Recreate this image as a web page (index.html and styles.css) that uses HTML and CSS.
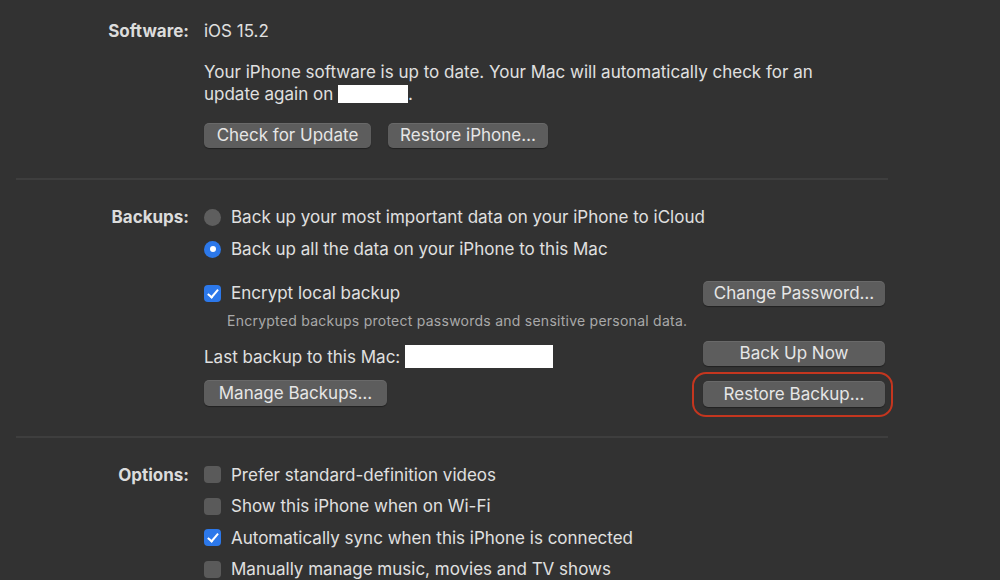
FILE: index.html
```html
<!DOCTYPE html>
<html>
<head>
<meta charset="utf-8">
<link rel="stylesheet" href="styles.css">
</head>
<body>
<div class="page">
  <section class="section sec-software">
    <div class="label">Software:</div>
    <div class="content">
      <div class="line">iOS 15.2</div>
      <p class="para">Your iPhone software is up to date. Your Mac will automatically check for an<br>update again on <span class="redact redact-date"></span>.</p>
      <div class="btn-row">
        <button class="btn btn-check">Check for Update</button>
        <button class="btn btn-restore-iphone">Restore iPhone…</button>
      </div>
    </div>
  </section>
  <div class="sep"></div>
  <section class="section sec-backups">
    <div class="label">Backups:</div>
    <div class="content">
      <div class="opt"><span class="radio"></span><span>Back up your most important data on your iPhone to iCloud</span></div>
      <div class="opt"><span class="radio on"></span><span>Back up all the data on your iPhone to this Mac</span></div>
      <div class="split row-encrypt">
        <div class="opt"><span class="check on"></span><span>Encrypt local backup</span></div>
        <button class="btn btn-side">Change Password…</button>
      </div>
      <div class="note">Encrypted backups protect passwords and sensitive personal data.</div>
      <div class="split row-last">
        <div class="last"><span>Last backup to this Mac:</span><span class="redact redact-last"></span></div>
        <button class="btn btn-side">Back Up Now</button>
      </div>
      <div class="split row-manage">
        <button class="btn btn-manage">Manage Backups…</button>
        <div class="ring-wrap"><button class="btn btn-side">Restore Backup…</button></div>
      </div>
    </div>
  </section>
  <div class="sep sep2"></div>
  <section class="section sec-options">
    <div class="label">Options:</div>
    <div class="content">
      <div class="opt opt-o"><span class="check"></span><span>Prefer standard-definition videos</span></div>
      <div class="opt opt-o"><span class="check"></span><span>Show this iPhone when on Wi-Fi</span></div>
      <div class="opt opt-o"><span class="check on"></span><span>Automatically sync when this iPhone is connected</span></div>
      <div class="opt opt-o"><span class="check"></span><span>Manually manage music, movies and TV shows</span></div>
    </div>
  </section>
</div>
</body>
</html>
```

FILE: styles.css
```css
html, body {
  margin: 0;
  padding: 0;
  background: #323232;
}
body {
  width: 1000px;
  height: 580px;
  overflow: hidden;
  font-family: Inter, "Noto Sans", sans-serif;
  font-size: 17px;
  color: #e0e0e0;
}
.page {
  width: 1000px;
}
.section {
  display: flex;
  align-items: flex-start;
  column-gap: 15px;
}
.label {
  width: 189px;
  flex: none;
  text-align: right;
  font-weight: 700;
  font-size: 17px;
  color: #dcdcdc;
  line-height: 22px;
}
.content {
  width: 681px;
  flex: none;
}
.sec-software { padding-top: 20px; }
.line { line-height: 22px; }
.para {
  margin: 19px 0 0 0;
  line-height: 22px;
}
.redact {
  display: inline-block;
  background: #ffffff;
  vertical-align: middle;
}
.redact-date {
  width: 70px;
  height: 18px;
  margin-top: -3px;
}
.btn-row {
  display: flex;
  gap: 17px;
  margin-top: 18px;
}
.btn {
  font-family: inherit;
  font-size: 17px;
  color: #e6e6e6;
  background: #5d5d5d;
  border: none;
  border-radius: 5px;
  height: 25px;
  padding: 0;
  line-height: 25px;
  box-shadow: 0 1px 1px rgba(0,0,0,0.35), inset 0 1px 0 rgba(255,255,255,0.08);
}
.btn-check { width: 167px; }
.btn-restore-iphone { width: 160px; }
.btn-manage { width: 183px; height: 26px; }
.btn-side { width: 182px; }
.sep {
  margin: 30px 0 0 16px;
  width: 872px;
  height: 2px;
  background: #3e3e3e;
}
.sec-backups { padding-top: 21px; }
.sec-backups .label { margin-top: 5px; }
.opt {
  display: flex;
  align-items: center;
  height: 32px;
  gap: 10px;
}
.radio {
  width: 17px;
  height: 17px;
  border-radius: 50%;
  background: #5e5e5e;
  flex: none;
  position: relative;
  box-sizing: border-box;
}
.radio.on {
  background: #2c78ea;
}
.radio.on::after {
  content: "";
  position: absolute;
  left: 5.5px;
  top: 5.5px;
  width: 6px;
  height: 6px;
  border-radius: 50%;
  background: #ffffff;
}
.check {
  width: 17px;
  height: 17px;
  border-radius: 4px;
  background: #5a5a5a;
  flex: none;
  position: relative;
}
.check.on { background: #2c78ea; }
.check.on::after {
  content: "";
  position: absolute;
  left: 5.5px;
  top: 2px;
  width: 4px;
  height: 9px;
  border: solid #ffffff;
  border-width: 0 2.2px 2.2px 0;
  transform: rotate(40deg);
}
.split {
  display: flex;
  justify-content: space-between;
  align-items: center;
}
.row-encrypt { margin-top: 12px; }
.note {
  margin: 3px 0 0 23px;
  font-size: 14px;
  letter-spacing: 0.25px;
  line-height: 18px;
  color: #a9a9a9;
}
.row-last {
  margin-top: 11px;
  align-items: flex-start;
}
.last {
  display: flex;
  align-items: center;
  gap: 5px;
  margin-top: 4px;
}
.redact-last {
  width: 148px;
  height: 23px;
}
.row-manage {
  margin-top: 12px;
  align-items: flex-start;
}
.ring-wrap {
  position: relative;
  margin-top: 1px;
}
.ring-wrap::before {
  content: "";
  position: absolute;
  left: -11px;
  right: -8px;
  top: -9px;
  bottom: -10px;
  border: 2px solid #c4361f;
  border-radius: 14px;
}
.ring-wrap .btn { display: block; height: 26px; }
.sep2 { margin-top: 29px; }
.sec-options { padding-top: 21px; }
.sec-options .label { margin-top: 5px; }
.opt-o { height: 31.5px; }
```
